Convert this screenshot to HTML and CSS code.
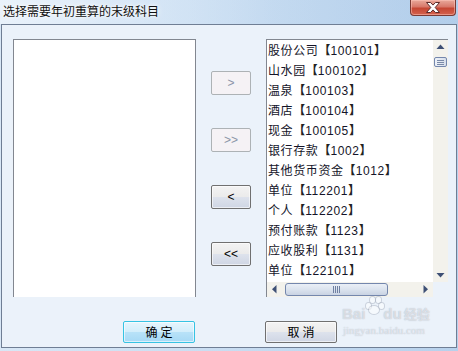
FILE: index.html
```html
<!DOCTYPE html>
<html lang="zh">
<head>
<meta charset="utf-8">
<title>选择需要年初重算的末级科目</title>
<link rel="stylesheet" href="styles.css">
</head>
<body>
<div class="window">
  <div class="titlebar">
    <span class="title">选择需要年初重算的末级科目</span>
    <span class="close">
      <svg width="18" height="11" viewBox="0 0 18 11"><path d="M2.5 0.5h4l2.5 2.6 2.5-2.6h4l-4.3 5 4.3 5h-4l-2.5-2.6-2.5 2.6h-4l4.3-5z" fill="#fff" stroke="#5a2a2a" stroke-width="1"/></svg>
    </span>
  </div>
  <div class="client">
    <div class="main">
      <div class="list left-list"></div>
      <div class="movers">
        <button class="btn mover disabled">&gt;</button>
        <button class="btn mover disabled">&gt;&gt;</button>
        <button class="btn mover">&lt;</button>
        <button class="btn mover">&lt;&lt;</button>
      </div>
      <div class="list right-list">
        <ul class="items">
          <li>股份公司<span class="b">【</span>100101<span class="b">】</span></li>
          <li>山水园<span class="b">【</span>100102<span class="b">】</span></li>
          <li>温泉<span class="b">【</span>100103<span class="b">】</span></li>
          <li>酒店<span class="b">【</span>100104<span class="b">】</span></li>
          <li>现金<span class="b">【</span>100105<span class="b">】</span></li>
          <li>银行存款<span class="b">【</span>1002<span class="b">】</span></li>
          <li>其他货币资金<span class="b">【</span>1012<span class="b">】</span></li>
          <li>单位<span class="b">【</span>112201<span class="b">】</span></li>
          <li>个人<span class="b">【</span>112202<span class="b">】</span></li>
          <li>预付账款<span class="b">【</span>1123<span class="b">】</span></li>
          <li>应收股利<span class="b">【</span>1131<span class="b">】</span></li>
          <li>单位<span class="b">【</span>122101<span class="b">】</span></li>
        </ul>
        <div class="vscroll">
          <svg class="arr" width="15" height="15" viewBox="0 0 15 15"><path d="M3.5 9h8l-4-4.5z" fill="#3e5075"/></svg>
          <div class="vthumb"><i></i><i></i><i></i></div>
          <div class="vtrack"></div>
          <svg class="arr" width="15" height="15" viewBox="0 0 15 15"><path d="M3.5 6h8l-4 4.5z" fill="#3e5075"/></svg>
        </div>
        <div class="hscroll">
          <svg class="arr" width="15" height="15" viewBox="0 0 15 15"><path d="M9.5 3v8.5l-4.5-4.25z" fill="#3e5075"/></svg>
          <div class="hthumb"><span class="grip"><i></i><i></i><i></i><i></i></span></div>
          <div class="htrack"></div>
          <svg class="arr" width="15" height="15" viewBox="0 0 15 15"><path d="M5.5 3v8.5l4.5-4.25z" fill="#3e5075"/></svg>
        </div>
        <div class="corner"></div>
      </div>
    </div>
    <div class="actions">
      <button class="btn action default">确定</button>
      <button class="btn action">取消</button>
    </div>
    <div class="watermark">
      <span class="wm-main">Bai<span class="paw"><i></i><i></i><i></i><i></i><b></b></span>du<span class="wm-cn">经验</span></span>
      <span class="wm-url">jingyan.baidu.com</span>
    </div>
  </div>
</div>
</body>
</html>
```
FILE: styles.css
```css
* { box-sizing: border-box; }
html, body { margin: 0; padding: 0; }
body {
  width: 458px;
  height: 351px;
  overflow: hidden;
  background: #c6dcf1;
  font-family: "Liberation Sans", "Noto Sans CJK SC", sans-serif;
  font-size: 12px;
  color: #000;
}
.window {
  display: flex;
  flex-direction: column;
  width: 458px;
  height: 351px;
  background: linear-gradient(to right, #d8e7f6 0%, #cadef2 45%, #b7d1ec 100%);
}
.titlebar {
  height: 24px;
  display: flex;
  justify-content: space-between;
  align-items: flex-start;
  padding-left: 3px;
  padding-right: 2px;
  background: linear-gradient(to right, rgba(235,243,251,0.9) 0%, rgba(225,237,249,0.6) 25%, rgba(190,214,238,0.2) 60%, rgba(170,200,232,0.4) 100%);
}
.title {
  margin-top: 3px;
  font-family: "Noto Sans CJK SC", sans-serif;
  font-size: 12px;
  line-height: 16px;
  color: #111;
  text-shadow: 0 0 6px #fff, 0 0 3px #fff;
}
.close {
  width: 46px;
  height: 16px;
  display: flex;
  align-items: center;
  justify-content: center;
  border: 1px solid #7a3a34;
  border-top: none;
  border-radius: 0 0 4px 4px;
  background: linear-gradient(to bottom, #e9a99b 0%, #d8786a 45%, #c54633 55%, #d4624e 100%);
  box-shadow: inset 0 0 0 1px rgba(255,200,190,0.5);
}
.close svg { display: block; }
.client {
  position: relative;
  margin: 0 1px;
  height: 324px;
  border: 1px solid #6f7e94;
  background: #ebf2fa;
  padding: 14px 0 4px 11px;
  display: flex;
  flex-direction: column;
}
.main {
  display: flex;
  gap: 15px;
  height: 258px;
}
.list {
  height: 258px;
  background: #fff;
  border: 1px solid #828790;
  border-bottom: none;
}
.left-list { width: 183px; }
.movers {
  width: 40px;
  display: flex;
  flex-direction: column;
  gap: 33px;
  padding-top: 32px;
}
.btn {
  margin: 0;
  padding: 0;
  font-family: "Liberation Sans", "Noto Sans CJK SC", sans-serif;
  font-size: 12px;
  color: #000;
  border: 1px solid #707070;
  border-radius: 2px;
  background: linear-gradient(to bottom, #f3f3f3 0%, #ebebeb 48%, #dde2ec 52%, #cfd6e4 100%);
  box-shadow: inset 0 0 0 1px rgba(255,255,255,0.6);
}
.mover {
  width: 40px;
  height: 24px;
  line-height: 20px;
}
.mover.disabled {
  border-color: #adb2b5;
  background: #f5f2f5;
  color: #8b95a8;
  box-shadow: none;
}
.right-list {
  width: 182px;
  border-right: none;
  display: grid;
  grid-template-columns: 166px 15px;
  grid-template-rows: 242px 15px;
}
.items {
  list-style: none;
  margin: 0;
  padding: 0 0 0 1px;
  overflow: hidden;
}
.items li {
  height: 20px;
  line-height: 20px;
  white-space: nowrap;
  font-size: 12px;
  font-family: "Liberation Sans", "Noto Sans CJK SC", sans-serif;
  letter-spacing: 0.6px;
  color: #141428;
}
.items li .b {
  font-family: "Noto Sans CJK SC", sans-serif;
  font-weight: bold;
  letter-spacing: 0;
  color: #222;
}
.vscroll {
  display: flex;
  flex-direction: column;
  background: #f3f2ec;
}
.vscroll .arr, .hscroll .arr { display: block; flex: none; }
.vthumb {
  margin: 2px 1px 0 1px;
  height: 10px;
  flex: none;
  border: 1px solid #7487ad;
  border-radius: 2px;
  background: linear-gradient(to right, #eef2f8, #d6deea);
  display: flex;
  flex-direction: column;
  align-items: center;
  justify-content: center;
  gap: 1px;
}
.vthumb i {
  display: block;
  width: 7px;
  height: 1px;
  background: #7a8aa8;
}
.vtrack { flex: 1; }
.hscroll {
  display: flex;
  align-items: stretch;
  background: #f3f2ec;
}
.hthumb {
  margin: 1px 0 1px 3px;
  width: 103px;
  flex: none;
  border: 1px solid #7487ad;
  border-radius: 3px;
  background: linear-gradient(to bottom, #eaeff6 0%, #dbe3ee 50%, #c9d3e3 100%);
  display: flex;
  align-items: center;
  justify-content: center;
}
.grip { display: flex; gap: 1px; }
.grip i { display: block; width: 1px; height: 7px; background: #6f80a2; }
.htrack { flex: 1; }
.corner { background: #ebf2fa; }
.actions {
  display: flex;
  gap: 70px;
  padding-left: 110px;
  margin-top: 24px;
}
.action {
  width: 72px;
  height: 22px;
  font-family: "Noto Sans CJK SC", sans-serif;
  letter-spacing: 3px;
  text-indent: 3px;
  line-height: 18px;
}
.action.default {
  border-color: #36c3e3;
  background: linear-gradient(to bottom, #e6f5fc 0%, #d3eefb 48%, #b8e2f8 52%, #a6d9f5 100%);
}
.watermark {
  position: absolute;
  left: 340px;
  top: 272px;
  display: flex;
  flex-direction: column;
  align-items: flex-start;
  color: rgba(255,255,255,0.55);
  pointer-events: none;
  text-shadow: 0 0 1px rgba(120,130,150,0.6);
}
.wm-main {
  display: flex;
  align-items: flex-end;
  font-family: "Liberation Sans", sans-serif;
  font-weight: bold;
  font-size: 15px;
  line-height: 18px;
}
.wm-cn { font-family: "Noto Sans CJK SC", sans-serif; font-size: 13px; margin-left: 2px; }
.paw {
  position: relative;
  width: 16px;
  height: 26px;
  margin: 0 1px;
}
.paw i, .paw b {
  position: absolute;
  display: block;
  border-radius: 50%;
  background: rgba(255,255,255,0.5);
  box-shadow: 0 0 0 1px rgba(140,150,165,0.35);
}
.paw i { width: 5px; height: 6px; }
.paw i:nth-child(1) { left: 0; top: 6px; }
.paw i:nth-child(2) { left: 4px; top: 0; }
.paw i:nth-child(3) { left: 10px; top: 0; }
.paw i:nth-child(4) { left: 13px; top: 6px; }
.paw b { left: 3px; top: 9px; width: 10px; height: 8px; }
.wm-url {
  font-family: "Liberation Serif", serif;
  font-size: 11px;
  line-height: 14px;
  margin-left: 1px;
}
```
